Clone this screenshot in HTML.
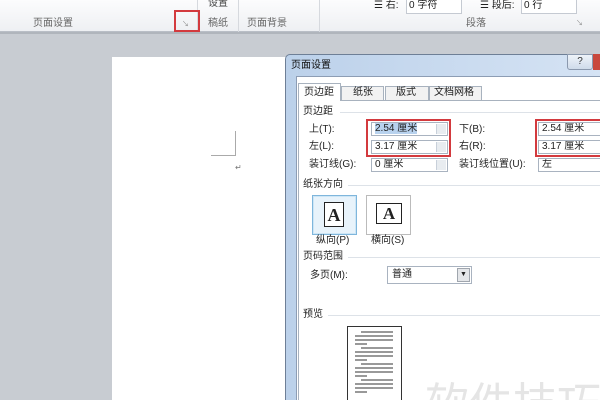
<!DOCTYPE html>
<html><head><meta charset="utf-8"><style>
*{margin:0;padding:0;box-sizing:border-box}
html{width:600px;height:400px;overflow:hidden}
body{width:600px;height:400px;overflow:hidden;position:relative;background:#c8ccd2;font-family:"Liberation Sans","Noto Sans CJK SC",sans-serif;font-size:10px;color:#222}
.a{position:absolute}
.t{position:absolute;white-space:nowrap;font-size:10px;line-height:12px}
.inp{position:absolute;background:#fff;border:1px solid #a9b3c0;height:14px;font-size:10px;line-height:12px;padding-left:3px;overflow:hidden}
.spin{position:absolute;right:1px;top:1px;width:10px;height:10px;background:#e8ecf0;border-left:1px solid #c8d0da}
.red{position:absolute;border:2px solid #d33a3e}
.hr{position:absolute;height:1px;background:#dde2e8}
</style></head><body>
<div class="a" style="left:0;top:0;width:600px;height:32px;background:linear-gradient(#fcfcfd,#eef0f3);border-bottom:1px solid #b9bec6"></div>
<div class="a" style="left:0;top:32px;width:600px;height:2px;background:#b0b5bc"></div>
<div class="a" style="left:197px;top:0;width:1px;height:32px;background:#d6d9de"></div>
<div class="a" style="left:238px;top:0;width:1px;height:32px;background:#d6d9de"></div>
<div class="a" style="left:319px;top:0;width:1px;height:32px;background:#d6d9de"></div>
<div class="t" style="left:33px;top:18px;color:#666">页面设置</div>
<div class="t" style="left:208px;top:0px;color:#444;line-height:8px;height:8px;overflow:hidden">设置</div>
<div class="t" style="left:208px;top:18px;color:#666">稿纸</div>
<div class="t" style="left:247px;top:18px;color:#666">页面背景</div>
<div class="t" style="left:466px;top:18px;color:#666">段落</div>
<div class="t" style="left:374px;top:0px;height:10px;overflow:hidden">☰ 右:</div>
<div class="a" style="left:406px;top:0px;width:56px;height:14px;background:#fff;border:1px solid #c5cad2;border-top:none"></div>
<div class="t" style="left:409px;top:0px;height:10px;overflow:hidden">0 字符</div>
<div class="t" style="left:480px;top:0px;height:10px;overflow:hidden">☰ 段后:</div>
<div class="a" style="left:521px;top:0px;width:56px;height:14px;background:#fff;border:1px solid #c5cad2;border-top:none"></div>
<div class="t" style="left:524px;top:0px;height:10px;overflow:hidden">0 行</div>
<div class="t" style="left:576px;top:18px;font-size:7px;color:#888">↘</div>
<div class="t" style="left:182px;top:19px;font-size:7px;color:#888">↘</div>
<div class="red" style="left:174px;top:10px;width:26px;height:22px"></div>
<div class="a" style="left:112px;top:57px;width:175px;height:343px;background:#fff"></div>
<div class="a" style="left:211px;top:131px;width:25px;height:25px;border-right:1px solid #aaa;border-bottom:1px solid #aaa"></div>
<div class="t" style="left:235px;top:162px;font-size:8px;color:#777">↵</div>
<div class="a" style="left:285px;top:54px;width:315px;height:346px;background:linear-gradient(90deg,#bcd1ea,#d5e3f4);border:1px solid #6e7f96;border-right:none;border-bottom:none;border-radius:5px 0 0 0"></div>
<div class="t" style="left:291px;top:60px;font-size:10px;color:#111">页面设置</div>
<div class="a" style="left:567px;top:54px;width:26px;height:16px;border:1px solid #8b99ae;border-radius:0 0 3px 3px;background:linear-gradient(#eef3f9,#cfdbea);font-size:10px;text-align:center;line-height:14px;color:#333">?</div>
<div class="a" style="left:593px;top:54px;width:7px;height:16px;background:#c9483c"></div>
<div class="a" style="left:296px;top:76px;width:304px;height:324px;background:#fff;border:1px solid #8d9db4;border-right:none;border-bottom:none"></div>
<div class="a" style="left:341px;top:86px;width:43px;height:15px;border:1px solid #a8b2be;background:#f2f2f2"></div>
<div class="a" style="left:385px;top:86px;width:44px;height:15px;border:1px solid #a8b2be;background:#f2f2f2"></div>
<div class="a" style="left:429px;top:86px;width:53px;height:15px;border:1px solid #a8b2be;background:#f2f2f2"></div>
<div class="a" style="left:298px;top:100px;width:302px;height:300px;border:1px solid #a8b2be;border-right:none;border-bottom:none"></div>
<div class="a" style="left:298px;top:83px;width:43px;height:18px;border:1px solid #a8b2be;border-bottom:none;background:#fff"></div>
<div class="t" style="left:304px;top:87px">页边距</div>
<div class="t" style="left:353px;top:87px">纸张</div>
<div class="t" style="left:396px;top:87px">版式</div>
<div class="t" style="left:434px;top:87px">文档网格</div>
<div class="t" style="left:303px;top:106px">页边距</div><div class="hr" style="left:340px;top:112px;width:260px"></div>
<div class="t" style="left:309px;top:124px">上(T):</div>
<div class="t" style="left:309px;top:141px">左(L):</div>
<div class="t" style="left:309px;top:159px">装订线(G):</div>
<div class="inp" style="left:371px;top:122px;width:77px"><span style="background:#b8d2ee">2.54 厘米</span><div class="spin"></div></div>
<div class="inp" style="left:371px;top:140px;width:77px">3.17 厘米<div class="spin"></div></div>
<div class="inp" style="left:371px;top:158px;width:77px">0 厘米<div class="spin"></div></div>
<div class="red" style="left:366px;top:119px;width:85px;height:38px"></div>
<div class="t" style="left:459px;top:124px">下(B):</div>
<div class="t" style="left:459px;top:141px">右(R):</div>
<div class="t" style="left:459px;top:159px">装订线位置(U):</div>
<div class="inp" style="left:538px;top:122px;width:62px;border-right:none">2.54 厘米</div>
<div class="inp" style="left:538px;top:140px;width:62px;border-right:none">3.17 厘米</div>
<div class="inp" style="left:538px;top:158px;width:62px;border-right:none">左</div>
<div class="red" style="left:535px;top:119px;width:65px;height:38px;border-right:none"></div>
<div class="t" style="left:303px;top:179px">纸张方向</div><div class="hr" style="left:348px;top:185px;width:252px"></div>
<div class="a" style="left:312px;top:195px;width:45px;height:40px;border:1px solid #7fb6dc;background:#e8f3fb;box-shadow:inset 0 0 0 1px #cde6f6"></div>
<div class="a" style="left:324px;top:202px;width:20px;height:25px;background:#fff;border:1px solid #222;font-family:'Liberation Serif',serif;font-size:18px;font-weight:bold;text-align:center;line-height:24px">A</div>
<div class="a" style="left:366px;top:195px;width:45px;height:40px;border:1px solid #bbb;background:#fff"></div>
<div class="a" style="left:376px;top:203px;width:26px;height:21px;background:#fff;border:1px solid #222;font-family:'Liberation Serif',serif;font-size:17px;font-weight:bold;text-align:center;line-height:20px">A</div>
<div class="t" style="left:316px;top:235px">纵向(P)</div>
<div class="t" style="left:371px;top:235px">横向(S)</div>
<div class="t" style="left:303px;top:251px">页码范围</div><div class="hr" style="left:348px;top:257px;width:252px"></div>
<div class="t" style="left:310px;top:270px">多页(M):</div>
<div class="a" style="left:387px;top:266px;width:85px;height:18px;border:1px solid #a9b3c0;background:#fff;padding-left:4px;line-height:16px">普通<div style="position:absolute;right:1px;top:1px;width:13px;height:14px;background:#e4e6e9;border:1px solid #a0a6ae;font-size:7px;text-align:center;line-height:12px">▼</div></div>
<div class="t" style="left:303px;top:309px">预览</div><div class="hr" style="left:328px;top:315px;width:272px"></div>
<div class="a" style="left:347px;top:326px;width:55px;height:74px;background:#fff;border:1px solid #333;border-bottom:none"></div>
<svg class="a" style="left:347px;top:326px" width="55" height="74">
<g stroke="#333" stroke-width="1">
<path d="M14 6H46M8 10H46M8 14H46M8 18H20"/>
<path d="M14 22H46M8 26H46M8 30H46M8 34H20"/>
<path d="M14 38H46M8 42H46M8 46H46M8 50H20"/>
<path d="M14 54H46M8 58H46M8 62H46M8 66H20"/>
</g></svg>
<div class="a" style="left:420px;top:378px;width:180px;height:22px;overflow:hidden"><div class="t" style="left:5px;top:3px;font-size:44px;line-height:48px;color:rgba(170,170,170,0.3)">软件技巧</div></div>
</body></html>
